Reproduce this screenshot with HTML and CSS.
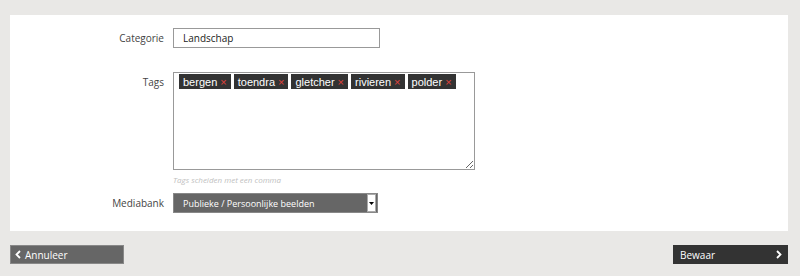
FILE: index.html
```html
<!DOCTYPE html>
<html lang="nl">
<head>
  <meta charset="UTF-8" />
  <title>Foto bewerken</title>
  <link rel="stylesheet" href="styles.css">
</head>
<body>

  <div class="paneel">
    <div class="rij">
      <label class="label">Categorie</label>
      <div class="veld">
        <input class="invoer" type="text" value="Landschap" />
      </div>
    </div>

    <div class="rij rij-tags">
      <label class="label">Tags</label>
      <div class="veld">
        <div class="tag-box">
          <span class="tag">bergen <span class="kruis">&times;</span></span>
          <span class="tag">toendra <span class="kruis">&times;</span></span>
          <span class="tag">gletcher <span class="kruis">&times;</span></span>
          <span class="tag">rivieren <span class="kruis">&times;</span></span>
          <span class="tag">polder <span class="kruis">&times;</span></span>
        </div>
        <div class="hulp">Tags scheiden met een comma</div>
      </div>
    </div>

    <div class="rij">
      <label class="label">Mediabank</label>
      <div class="veld">
        <div class="keuze">
          <span class="keuze-tekst">Publieke / Persoonlijke beelden</span>
          <span class="keuze-pijl">
            <svg width="5" height="3" viewBox="0 0 5 3"><path d="M0 0h5L2.5 3z" fill="#000"/></svg>
          </span>
        </div>
      </div>
    </div>
  </div>

  <div class="knoppen">
    <a class="knop knop-terug">
      <svg width="6" height="9" viewBox="0 0 6 9"><path d="M5 1L1.5 4.5 5 8" fill="none" stroke="#fff" stroke-width="1.8"/></svg>
      Annuleer
    </a>
    <a class="knop knop-bewaar">
      Bewaar
      <svg width="6" height="9" viewBox="0 0 6 9"><path d="M1 1l3.5 3.5L1 8" fill="none" stroke="#fff" stroke-width="1.8"/></svg>
    </a>
  </div>

</body>
</html>
```

FILE: styles.css
```css
* {
  margin: 0;
  padding: 0;
  box-sizing: border-box;
}

html, body {
  height: 100%;
  background: #e9e8e6;
  font-family: "Open Sans", Arial, sans-serif;
  font-size: 10px;
  color: #333;
}

body {
  padding: 15px 12px 0 10px;
}

/* Formulier */
.paneel {
  background: #fff;
  padding: 13px 0 18px;
}

.rij {
  display: flex;
  align-items: center;
  margin-bottom: 24px;
}

.rij-tags {
  align-items: flex-start;
  margin-bottom: 6px;
}

.rij:last-child {
  margin-bottom: 0;
}

.label {
  width: 154px;
  text-align: right;
  line-height: 20px;
  color: #444;
}

.rij-tags .label {
  line-height: 18px;
  padding-top: 1px;
}

.veld {
  margin-left: 9px;
}

.invoer {
  display: block;
  width: 207px;
  height: 20px;
  border: 1px solid #999;
  padding: 0 9px;
  font-family: "Open Sans", Arial, sans-serif;
  font-size: 10px;
  color: #222;
  outline: none;
}

.tag-box {
  width: 302px;
  height: 98px;
  border: 1px solid #999;
  padding: 1px 5px;
  overflow: auto;
  resize: vertical;
  display: flex;
  flex-wrap: wrap;
  align-content: flex-start;
  gap: 3px;
}

.tag {
  display: inline-flex;
  align-items: center;
  height: 15px;
  padding: 0 4px;
  background: #333;
  color: #fff;
  font-family: "Liberation Sans", Arial, sans-serif;
  font-size: 11px;
  white-space: nowrap;
}

.kruis {
  color: #e0413c;
  font-size: 11px;
  margin-left: 3px;
}

.hulp {
  margin-top: 4px;
  height: 13px;
  font-size: 8px;
  font-style: italic;
  color: #c0c0c0;
}

.keuze {
  display: flex;
  align-items: center;
  width: 205px;
  height: 20px;
  background: #666;
  border: 1px solid #888;
  color: #fff;
}

.keuze-tekst {
  flex: 1;
  padding-left: 9px;
  font-size: 9px;
}

.keuze-pijl {
  display: flex;
  align-items: center;
  justify-content: center;
  width: 9px;
  height: 18px;
  margin-right: 1px;
  background: #fff;
  border: 1px solid #aaa;
}

/* Knoppen onder */
.knoppen {
  display: flex;
  justify-content: space-between;
  margin-top: 14px;
}

.knop {
  display: flex;
  align-items: center;
  width: 114px;
  height: 19px;
  color: #fff;
  font-size: 10px;
  text-decoration: none;
  cursor: pointer;
}

.knop-terug {
  background: #666;
  padding-left: 4px;
  gap: 4px;
  border: 1px solid #888;
}

.knop-bewaar {
  width: 115px;
  background: #333;
  justify-content: space-between;
  padding: 0 6px 0 7px;
}
```
